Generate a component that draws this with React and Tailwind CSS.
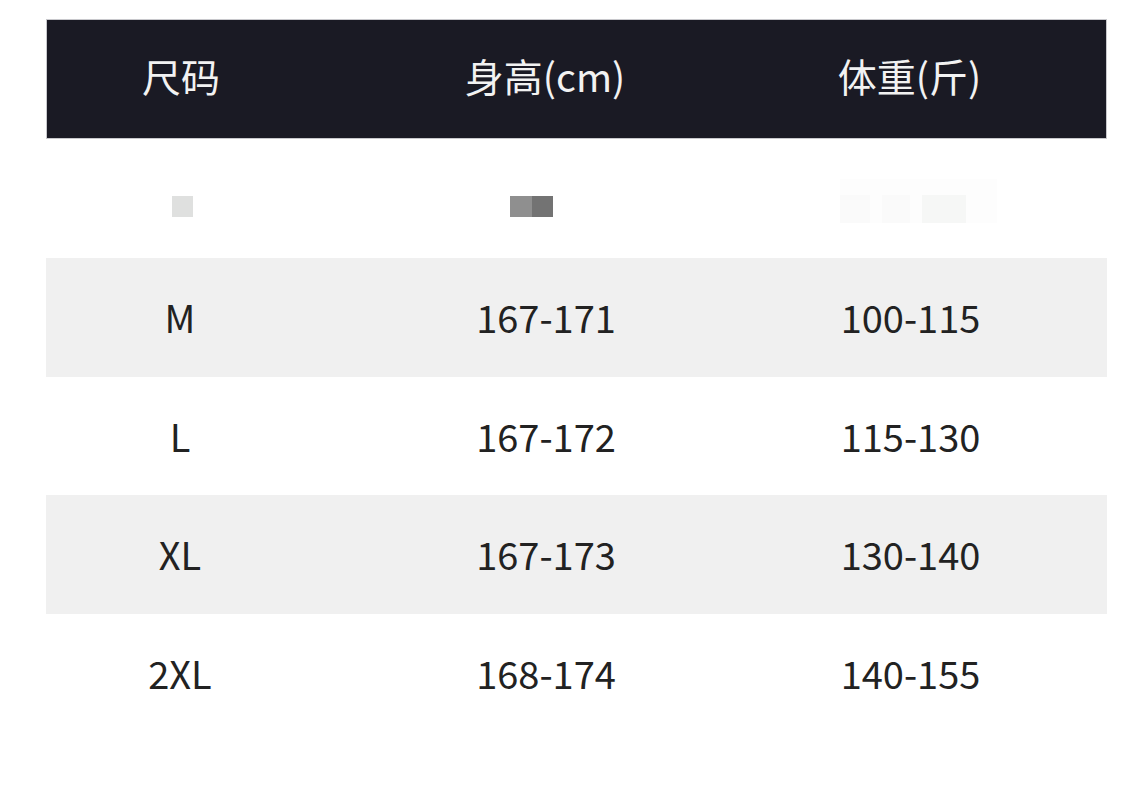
export default function App() {
  const rows = [
    ["M", "167-171", "100-115", true],
    ["L", "167-172", "115-130", false],
    ["XL", "167-173", "130-140", true],
    ["2XL", "168-174", "140-155", false],
  ];
  const font = { fontFamily: '"Noto Sans CJK SC", "Noto Sans", sans-serif' };
  return (
    <div className="w-[1132px] h-[791px] bg-white overflow-hidden pt-[19px] pl-[46px]" style={font}>
      <div className="w-[1061px]">
        <div className="grid grid-cols-[268px_464px_265px_1fr] h-[120px] items-center bg-[#1a1a24] border border-[#c8c8cc] text-[39px] font-normal text-[#f2f2f2] leading-none">
          <div className="text-center pb-[8px]">尺码</div>
          <div className="text-center pb-[8px] pr-[4px]">身高(cm)</div>
          <div className="text-center pb-[8px] pr-[4px]">体重(斤)</div>
          <div></div>
        </div>
        <div className="grid grid-cols-[268px_464px_265px_1fr] h-[119px] items-center bg-white">
          <div className="flex justify-center pt-[16px] pl-[4px]">
            <div className="w-[21px] h-[21px] bg-[#dfe0df]"></div>
          </div>
          <div className="flex justify-center pt-[16px] pr-[30px]">
            <div className="w-[22px] h-[21px] bg-[#8f8f8f]"></div>
            <div className="w-[21px] h-[21px] bg-[#737373]"></div>
          </div>
          <div className="flex justify-center pt-[4px] pl-[16px]">
            <div className="flex items-end gap-[12px] w-[157px] h-[44px] bg-[#fdfdfd]">
              <div className="w-[30px] h-[28px] bg-[#fafafa]"></div>
              <div className="w-[28px] h-[28px] bg-[#fafafa]"></div>
              <div className="w-[44px] h-[28px] bg-[#f6f7f6]"></div>
            </div>
          </div>
          <div></div>
        </div>
        {rows.map(([s, h, w, grey]) => (
          <div
            key={s}
            className={`grid grid-cols-[268px_464px_265px_1fr] h-[118.5px] items-center text-[38px] font-normal leading-none text-[#222222] ${grey ? "bg-[#f0f0f0]" : "bg-white"}`}
          >
            <div className="text-center">{s}</div>
            <div className="text-center">{h}</div>
            <div className="text-center">{w}</div>
            <div></div>
          </div>
        ))}
      </div>
    </div>
  );
}
